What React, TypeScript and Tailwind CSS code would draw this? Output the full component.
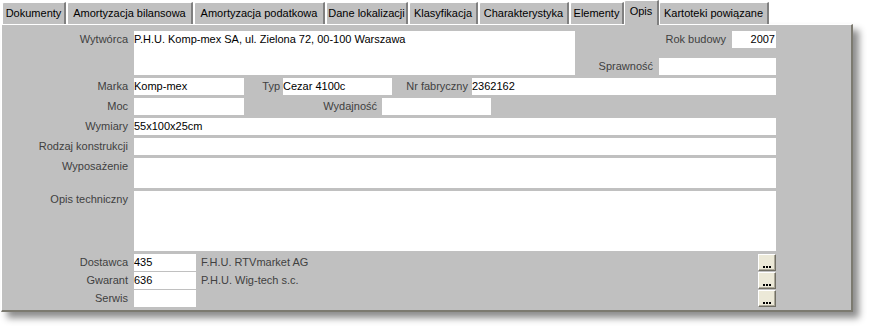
import React from 'react';

const tabs = [
  { label: 'Dokumenty', w: 'w-[64px]', ml: 'ml-[1px]' },
  { label: 'Amortyzacja bilansowa', w: 'w-[126px]', ml: 'ml-[1px]' },
  { label: 'Amortyzacja podatkowa', w: 'w-[131px]', ml: 'ml-[1px]' },
  { label: 'Dane lokalizacji', w: 'w-[82px]', ml: 'ml-[1px]' },
  { label: 'Klasyfikacja', w: 'w-[69px]', ml: 'ml-[1px]' },
  { label: 'Charakterystyka', w: 'w-[90px]', ml: 'ml-[1px]' },
  { label: 'Elementy', w: 'w-[54px]', ml: 'ml-[1px]' },
  { label: 'Opis', w: 'w-[35px]', ml: 'ml-0', active: true },
  { label: 'Kartoteki powiązane', w: 'w-[110px]', ml: 'ml-0' },
];

const Label = ({ text, className = '' }: { text: string; className?: string }) => (
  <div className={`shrink-0 text-right leading-[17px] text-[#404040] whitespace-nowrap ${className}`}>{text}</div>
);

const Field = ({ value = '', className = '' }: { value?: string; className?: string }) => (
  <div className={`shrink-0 bg-white leading-[17px] text-black whitespace-nowrap overflow-hidden ${className}`}>{value}</div>
);

const DotsButton = () => (
  <div className="ml-auto w-[18px] h-[17px] bg-[#ece9d8] border border-t-white border-l-white border-r-[#716f64] border-b-[#716f64] shadow-[inset_-1px_-1px_0_#aca899] flex items-end justify-center pb-[2px] gap-[1px]">
    <span className="w-[2px] h-[2px] bg-black" />
    <span className="w-[2px] h-[2px] bg-black" />
    <span className="w-[2px] h-[2px] bg-black" />
  </div>
);

const App = () => {
  return (
    <div className="w-[869px] h-[328px] bg-white text-[11px] font-['Liberation_Sans',Arial,sans-serif] overflow-hidden">
      <div className="w-[852px] ml-[1px]">
        {/* Tabs */}
        <div className="flex items-end h-[24px] relative z-10">
          {tabs.map(tab => (
            <div
              key={tab.label}
              className={`${tab.w} ${tab.ml} shrink-0 text-center text-black bg-[#c0c0c0] border-t border-l border-t-white border-l-white border-r-2 border-r-[#808080] rounded-tl-[2px] whitespace-nowrap ${
                tab.active ? 'h-[25px] -mb-[1px] leading-[20px] border-r' : 'h-[22px] leading-[21px]'
              }`}
            >
              {tab.label}
            </div>
          ))}
        </div>

        {/* Panel */}
        <div className="h-[288px] bg-[#c0c0c0] border-t border-l border-t-white border-l-white border-r-2 border-b-2 border-r-[#7c7a70] border-b-[#7c7a70] shadow-[6px_6px_7px_rgba(0,0,0,0.45)] pt-[6px]">
          <div className="w-[774px] flex flex-col gap-[3px]">
            {/* Wytwórca */}
            <div className="flex items-start">
              <Label text="Wytwórca" className="w-[126px] mr-[6px]" />
              <Field value="P.H.U. Komp-mex SA, ul. Zielona 72, 00-100 Warszawa" className="w-[441px] h-[44px]" />
              <div className="flex-1 h-[44px] flex flex-col justify-between">
                <div className="flex justify-end">
                  <Label text="Rok budowy" className="mr-[6px]" />
                  <Field value="2007" className="w-[44px] h-[17px] text-right pr-[1px]" />
                </div>
                <div className="flex justify-end">
                  <Label text="Sprawność" className="mr-[6px]" />
                  <Field className="w-[117px] h-[17px]" />
                </div>
              </div>
            </div>

            {/* Marka / Typ / Nr fabryczny */}
            <div className="flex items-start">
              <Label text="Marka" className="w-[126px] mr-[6px]" />
              <Field value="Komp-mex" className="w-[110px] h-[17px]" />
              <Label text="Typ" className="w-[36px] mr-[3px]" />
              <Field value="Cezar 4100c" className="w-[109px] h-[17px]" />
              <Label text="Nr fabryczny" className="w-[76px] mr-[4px]" />
              <Field value="2362162" className="w-[304px] h-[17px]" />
            </div>

            {/* Moc / Wydajność */}
            <div className="flex items-start">
              <Label text="Moc" className="w-[126px] mr-[6px]" />
              <Field className="w-[110px] h-[17px]" />
              <Label text="Wydajność" className="w-[133px] mr-[5px]" />
              <Field className="w-[109px] h-[17px]" />
            </div>

            <div className="flex items-start">
              <Label text="Wymiary" className="w-[126px] mr-[6px]" />
              <Field value="55x100x25cm" className="w-[642px] h-[17px]" />
            </div>

            <div className="flex items-start">
              <Label text="Rodzaj konstrukcji" className="w-[126px] mr-[6px]" />
              <Field className="w-[642px] h-[17px]" />
            </div>

            <div className="flex items-start">
              <Label text="Wyposażenie" className="w-[126px] mr-[6px]" />
              <Field className="w-[642px] h-[30px]" />
            </div>

            <div className="flex items-start">
              <Label text="Opis techniczny" className="w-[126px] mr-[6px]" />
              <Field className="w-[642px] h-[60px]" />
            </div>

            {/* Dostawca / Gwarant / Serwis */}
            <div className="flex flex-col gap-[1px]">
              <div className="flex items-start">
                <Label text="Dostawca" className="w-[126px] mr-[6px]" />
                <Field value="435" className="w-[62px] h-[17px]" />
                <Label text="F.H.U. RTVmarket AG" className="ml-[5px]" />
                <DotsButton />
              </div>
              <div className="flex items-start">
                <Label text="Gwarant" className="w-[126px] mr-[6px]" />
                <Field value="636" className="w-[62px] h-[17px]" />
                <Label text="P.H.U. Wig-tech s.c." className="ml-[5px]" />
                <DotsButton />
              </div>
              <div className="flex items-start">
                <Label text="Serwis" className="w-[126px] mr-[6px]" />
                <Field className="w-[62px] h-[17px]" />
                <DotsButton />
              </div>
            </div>
          </div>
        </div>
      </div>
    </div>
  );
};

export default App;
